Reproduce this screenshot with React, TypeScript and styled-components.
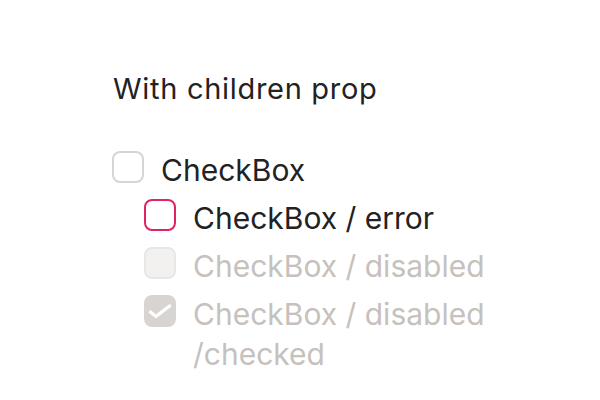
import { FC, ReactNode } from 'react';
import styled, { createGlobalStyle } from 'styled-components';

const GlobalStyle = createGlobalStyle`
html, body {
  margin:0;
  padding:0;
  background:#ffffff;
}
body {
  font-family:Inter, "Noto Sans", sans-serif;
  -webkit-font-smoothing:antialiased;
}
`;

/*----------Wrapper--------------------*/
const Wrapper = styled.div`
display:flex;
flex-direction:column;
width:600px;
height:400px;
padding:70px 0 0 112px;
box-sizing:border-box;
`;
const Title = styled.h2`
margin:0 0 43px 1px;
font-size:29px;
font-weight:400;
letter-spacing:0.7px;
line-height:38px;
color:#222222;
`;
/*----------Checkbox list--------------------*/
const List = styled.div`
display:flex;
flex-direction:column;
width:390px;
`;
const Nested = styled.div`
display:flex;
flex-direction:column;
padding-left:32px;
`;
const Row = styled.label`
display:flex;
align-items:flex-start;
gap:17px;
min-height:48px;
cursor:pointer;
`;
type BoxProps = { $error?: boolean; $disabled?: boolean; $checked?: boolean };
const Box = styled.span<BoxProps>`
flex:none;
display:flex;
align-items:center;
justify-content:center;
width:32px;
height:32px;
box-sizing:border-box;
border-radius:8px;
border:2px solid ${p => p.$error ? '#e0245e' : p.$checked ? '#d8d4d1' : p.$disabled ? '#e9e7e5' : '#d8d4d1'};
background:${p => p.$checked ? '#d8d4d1' : p.$disabled ? '#f2f1f0' : '#ffffff'};
`;
const Label = styled.span<{ $disabled?: boolean }>`
font-size:30px;
line-height:40px;
margin-top:-1px;
color:${p => p.$disabled ? '#c6c1bc' : '#222222'};
`;

type CheckProps = {
    error?: boolean;
    disabled?: boolean;
    checked?: boolean;
    children: ReactNode;
};
const CheckBox: FC<CheckProps> = ({ error, disabled, checked, children }) => (
    <Row>
        <Box $error={error} $disabled={disabled} $checked={checked}>
            {checked && (
                <svg width="28" height="28" viewBox="0 0 28 28">
                    <path d="M4.5 15 L10 19.5 L23.5 9" fill="none" stroke="#ffffff" strokeWidth="3.4" strokeLinecap="round" strokeLinejoin="round" />
                </svg>
            )}
        </Box>
        <Label $disabled={disabled}>{children}</Label>
    </Row>
);

const App: FC = () => {
    return (
        <>
            <GlobalStyle />
            <Wrapper>
                <Title>With children prop</Title>
                <List>
                    <CheckBox>CheckBox</CheckBox>
                    <Nested>
                        <CheckBox error>CheckBox / error</CheckBox>
                        <CheckBox disabled>CheckBox / disabled</CheckBox>
                        <CheckBox disabled checked>CheckBox / disabled /checked</CheckBox>
                    </Nested>
                </List>
            </Wrapper>
        </>
    );
};
export default App;
